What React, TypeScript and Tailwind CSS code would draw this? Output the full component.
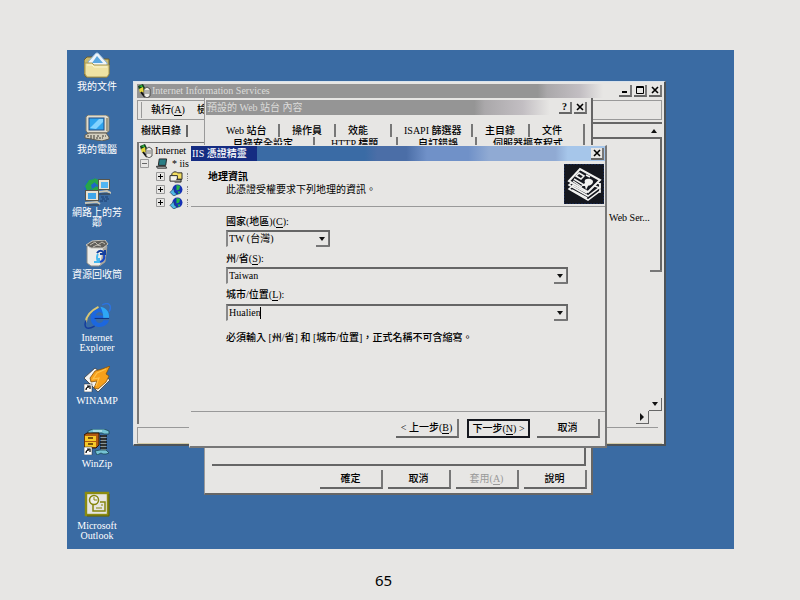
import React from "react";

const desktopIcons: { name: string; icon: React.ReactNode }[] = [
  { name: "我的文件", icon: <DocumentsIcon /> },
  { name: "我的電腦", icon: <ComputerIcon /> },
  { name: "網路上的芳鄰", icon: <NetworkIcon /> },
  { name: "資源回收筒", icon: <RecycleIcon /> },
  { name: "Internet Explorer", icon: <ExplorerIcon /> },
  { name: "WINAMP", icon: <WinampIcon /> },
  { name: "WinZip", icon: <WinZipIcon /> },
  { name: "Microsoft Outlook", icon: <OutlookIcon /> },
];

function DocumentsIcon() {
  return (
    <svg viewBox="0 0 26 26" className="size-[26px]">
      <path d="M0 8l3-3h6l2 2h14v15l-2 3H2l-2-3z" fill="#c9bb72" stroke="#6d5f2a" />
      <path d="M4 10L12 1l2 0 9 10v4H5z" fill="#eef4fa" stroke="#8db4d8" />
      <path d="M8 11l5-7 6 7z" fill="#5aa7e0" />
      <path d="M1 11h7l2 2h15v9l-2 3H3l-2-3z" fill="#efe3a4" stroke="#a99853" />
      <path d="M3 13h5l2 2h13" stroke="#fbf6d4" fill="none" />
    </svg>
  );
}

function ComputerIcon() {
  return (
    <svg viewBox="0 0 26 26" className="size-[26px]">
      <path d="M2 2l2-2h18l3 2v14l-3 2H4l-2-2z" fill="#dfdccf" stroke="#7c7866" />
      <rect x="5" y="3" width="15" height="12" fill="#2fa4ee" stroke="#264f86" />
      <path d="M6 13l9-9h4v3l-7 7z" fill="#82d3ff" />
      <path d="M23 3v13" stroke="#a29d86" strokeWidth="2" />
      <path d="M1 20l4-2h17l3 4v2l-7 2-17-3z" fill="#d3cfbf" stroke="#5e5b50" />
      <path d="M3 21h8m2 0h3m2 0h4M6 23h13" stroke="#3c3a35" strokeDasharray="2 1" />
    </svg>
  );
}

function NetworkIcon() {
  return (
    <svg viewBox="0 0 28 28" className="size-[28px]">
      <circle cx="11" cy="10" r="9.500" fill="#1f66c8" />
      <path d="M2 8l4-6 5-1 1 3-4 3 1 4-5 2zM11 0l5 2v6l-4-3zM9 11l5-3 3 5-3 4-5-2z" fill="#27a548" />
      <rect x="15.500" y="1.500" width="11" height="10" fill="#e6e2d3" stroke="#57554b" />
      <rect x="18" y="4" width="7" height="6" fill="#4fb5f2" />
      <path d="M15 14l9-1 4 2" stroke="#c9c5b4" strokeWidth="2" fill="none" />
      <path d="M16 16h11" stroke="#3b3932" />
      <rect x="2.500" y="12.500" width="13" height="10" fill="#e6e2d3" stroke="#57554b" />
      <rect x="5" y="15" width="8" height="6" fill="#3fa6ea" />
      <path d="M2 25l12-1 3 2" stroke="#c9c5b4" strokeWidth="2" fill="none" />
      <path d="M3 27h13" stroke="#3b3932" />
      <path d="M18 19h8m-7 2h7m-9 2h8" stroke="#1a3e70" strokeDasharray="3 1" />
    </svg>
  );
}

function RecycleIcon() {
  return (
    <svg viewBox="0 0 26 28" className="h-7 w-[26px]">
      <path d="M3 6h20l-2 16-6 4H7l-4-3z" fill="#ededea" stroke="#8b8b86" />
      <path d="M19 8l4-2-2 16-5 4z" fill="#a8a6a0" />
      <path d="M2 5l6-4 13-1 3 4-5 4H7z" fill="#615f5a" stroke="#c6c3bb" />
      <path d="M6 5l5-3 3 3 4-3 3 2M9 7l4-2 4 1" stroke="#c2beb4" fill="none" />
      <path d="M13 13c2-3 5-3 7 0m1-3v4h-5" stroke="#143f9e" strokeWidth="2" fill="none" />
      <path d="M14 14c-2 3-1 5 0 8m-4 0h5v-4" stroke="#47b9f0" strokeWidth="2" fill="none" />
      <path d="M20 15c1 4-1 6-4 7" stroke="#1546c8" strokeWidth="2" fill="none" />
    </svg>
  );
}

function ExplorerIcon() {
  return (
    <svg viewBox="0 0 28 28" className="size-[27px]">
      <path d="M26 18c-3 10-19 9-19-2C7 3 26 2 26 13v3H12c0 6 7 6 8 2z" fill="#1c67df" />
      <path d="M12 13c1-5 7-5 8 0z" fill="#3a6ba3" />
      <path d="M17 4c6 1 9 5 9 10v2h-6c0-5-1-8-3-12z" fill="#2ea7f5" />
      <path d="M19 2c8-4 10 2 7 7" fill="none" stroke="#2b73e0" strokeWidth="1.5" />
      <path d="M15 4C7 8 2 14 2 20" fill="none" stroke="#d9c774" strokeWidth="2" />
      <path d="M2 18c-3 9 2 10 9 6" fill="none" stroke="#143b9c" strokeWidth="1.5" />
      <path d="M11 16h15" stroke="#0e2f7e" />
    </svg>
  );
}

function ShortcutBadge() {
  return (
    <>
      <rect x="0" y="18" width="8" height="8" fill="#fff" stroke="#222" strokeWidth=".5" />
      <path d="M2 24c0-2 1-3 3-3m-2-1h3v3" fill="none" stroke="#000" strokeWidth="1.2" />
    </>
  );
}

function WinampIcon() {
  return (
    <svg viewBox="0 0 26 26" className="size-[26px]">
      <path d="M0 12L11 2l15 12-12 12z" fill="#f3f3f1" stroke="#3c3c3c" strokeWidth=".8" />
      <path d="M26 0l-8 3-7 2-5 7 1 4 6-1-3 7 4 1 8-7 3-6-3-2z" fill="#f7a01b" stroke="#83500a" strokeWidth=".8" />
      <path d="M22 3l-9 4-4 6 6-1-3 8" fill="none" stroke="#ffc24a" strokeWidth="1.200" />
      <ShortcutBadge />
    </svg>
  );
}

function WinZipIcon() {
  return (
    <svg viewBox="0 0 26 26" className="size-[26px]">
      <path d="M4 2l5-2h11l5 2v3l-5 0-2-1H9L4 5z" fill="#75c3d4" stroke="#1d4a55" strokeWidth=".8" />
      <path d="M9 2h9" stroke="#d8f4f8" />
      <path d="M17 6h5v15h-5z" fill="#8a9496" />
      <path d="M16 7h7m-7 3h7m-7 3h7m-7 3h7m-7 3h7" stroke="#111" strokeWidth="1.6" />
      <path d="M11 22l5-1h6l3 3-3 1h-3l-2-1-4 2z" fill="#75c3d4" stroke="#1d4a55" strokeWidth=".8" />
      <path d="M0 6l3-2h12v12l-3 3H0z" fill="#b05a12" stroke="#2d1703" />
      <rect x="1" y="7" width="11" height="5" fill="#f7c928" />
      <rect x="1" y="13" width="11" height="5" fill="#f7c928" />
      <path d="M4 9h5M4 15h5" stroke="#4d2a03" strokeWidth="1.5" />
      <ShortcutBadge />
    </svg>
  );
}

function OutlookIcon() {
  return (
    <svg viewBox="0 0 26 26" className="size-[26px]">
      <rect x="2" y="2" width="22" height="22" fill="#e7e6e0" stroke="#8c8c10" strokeWidth="2.400" />
      <path d="M3 25h22V3" fill="none" stroke="#5f5f08" />
      <circle cx="10" cy="9" r="4.500" fill="#f1f0ea" stroke="#85850c" strokeWidth="1.500" />
      <path d="M10 6v3h3" fill="none" stroke="#85850c" />
      <path d="M9 14v6h12v-9h-5" fill="none" stroke="#85850c" strokeWidth="1.500" />
      <path d="M12 17h6M17 14h2" stroke="#85850c" />
    </svg>
  );
}

function ServerIcon() {
  return (
    <svg viewBox="0 0 14 14" className="size-3.5 shrink-0">
      <path d="M1 2l5-2 2 4-2 3-4-1z" fill="#123c1c" />
      <path d="M2 2l3-1 1 3z" fill="#2ab53c" />
      <path d="M2 5l4-2 1 5-4 1z" fill="#e8d83a" />
      <path d="M4 8l4 5" stroke="#111" strokeWidth="2" />
      <path d="M7 5l3-2 3 2v7l-3 2-3-2z" fill="#ecebe6" stroke="#333" strokeWidth=".8" />
      <path d="M8 7h4M8 9h4" stroke="#777" />
    </svg>
  );
}

function TerminalIcon() {
  return (
    <svg viewBox="0 0 14 13" className="h-3 w-3.5 shrink-0">
      <path d="M4 1h8l-1 7H3z" fill="#2a7d85" stroke="#222" />
      <path d="M1 9h10l1 2H2z" fill="#ccc" stroke="#222" />
    </svg>
  );
}

function FtpIcon() {
  return (
    <svg viewBox="0 0 15 13" className="h-3 w-3.5 shrink-0">
      <path d="M3 3l2-2h3l1 1h5v7H3z" fill="#f2dd62" stroke="#222" />
      <path d="M1 5h8v6H1z" fill="#f3f3ee" stroke="#222" />
      <path d="M8 9h5v3H6" fill="#9a9a94" stroke="#222" />
    </svg>
  );
}

function SiteIcon() {
  return (
    <svg viewBox="0 0 15 13" className="h-3 w-3.5 shrink-0">
      <circle cx="9" cy="6" r="5.500" fill="#1530b5" />
      <path d="M8 1l4 1-1 4-3 1zM9 8l3 0-1 3z" fill="#25b846" />
      <path d="M1 9l4-4 1 4 3 2-4 2z" fill="#4fb7e6" stroke="#17314a" strokeWidth=".7" />
    </svg>
  );
}

function CertificateIcon() {
  return (
    <svg viewBox="0 0 40 40" className="size-10 shrink-0 bg-[#15171e]" aria-hidden="true">
      <rect x=".5" y=".5" width="39" height="39" fill="none" stroke="#1b3470" strokeDasharray="1 2" />
      <path d="M5 25l19 11 12-9v-3L16 16zM5 21l19 11 12-9v-3L16 12z" fill="#15171e" stroke="#f2f2f0" strokeWidth="1.500" />
      <path d="M5 17L16 5l20 11-12 12z" fill="#15171e" stroke="#f2f2f0" strokeWidth="2" />
      <path d="M15 9l5 3-3 3-5-3z" fill="none" stroke="#f2f2f0" strokeWidth="1.500" />
      <path d="M22 11l4 2M10 15l10 6M9 17l9 6" stroke="#f2f2f0" strokeWidth="1.500" />
      <path d="M23 15c4-1 8 2 5 5-2 2-3 1-4 2l-2 4-1-4-4 0 4-3c-1-2 0-4 2-4z" fill="#f2f2f0" />
      <path d="M8 21l15 8M8 26l15 8M36 19v5M36 26v3" stroke="#f2f2f0" strokeWidth="1.500" />
    </svg>
  );
}

type Glyph = "min" | "max" | "close" | "help";

function CaptionButton({ kind, label }: { kind: Glyph; label: string }) {
  return (
    <button
      aria-label={label}
      className="flex h-3 w-[13px] shrink-0 items-center justify-center border-r-2 border-b-2 border-r-[#777] border-b-[#666] bg-[#e7e6e4] text-[10px] leading-none font-bold text-black"
    >
      {kind === "help" ? (
        "?"
      ) : (
        <svg viewBox="0 0 8 8" className="size-2" fill="none" stroke="#000">
          {kind === "min" && <path d="M1 6h5" strokeWidth="2" />}
          {kind === "max" && <path d="M.5 .5h7v7h-7zM.5 1.500h7" />}
          {kind === "close" && <path d="M1 1l6 6M7 1L1 7" strokeWidth="1.600" />}
        </svg>
      )}
    </button>
  );
}

function Key({ children }: { children: string }) {
  return (
    <>
      (<span className="border-b border-current">{children}</span>)
    </>
  );
}

function Arrow({ d }: { d: string }) {
  return (
    <svg viewBox="0 0 8 8" className="size-2" fill="#111">
      <path d={d} />
    </svg>
  );
}
const DOWN = "M1 2h6L4 6z";
const UP = "M1 6h6L4 2z";
const RIGHT = "M2 0v8l4-4z";

function PushButton({ children, disabled, primary }: { children: React.ReactNode; disabled?: boolean; primary?: boolean }) {
  return (
    <button
      disabled={disabled}
      className={
        "flex h-[19px] w-[63px] items-center justify-center leading-3 whitespace-nowrap " +
        (primary
          ? "border-2 border-[#15171e] "
          : "border-r-2 border-b-2 border-r-[#777] border-b-[#666] ") +
        (disabled ? "text-[#999]" : "font-medium text-black")
      }
    >
      <span>{children}</span>
    </button>
  );
}

function ComboShell({ children, className }: { children: React.ReactNode; className: string }) {
  return (
    <div
      className={
        "relative flex h-[17px] border-t-2 border-r-2 border-b border-l-2 border-t-[#666] border-r-[#666] border-b-[#e7e6e4] border-l-[#888] " +
        className
      }
    >
      {children}
      <span className="pointer-events-none absolute top-0 -right-px flex h-[15px] w-[13px] items-center justify-center border-r border-b-2 border-[#777]">
        <Arrow d={DOWN} />
      </span>
    </div>
  );
}

function ExpandBox({ open }: { open?: boolean }) {
  return (
    <svg viewBox="0 0 9 9" className="size-[9px] shrink-0" fill="none">
      <path d="M.5 .5h8v8h-8z" stroke="#999" />
      <path d={open ? "M2 4.500h5" : "M2 4.500h5M4.500 2v5"} stroke={open ? "#666" : "#000"} />
    </svg>
  );
}

function TabLabel({ children, className }: { children: string; className: string }) {
  return (
    <button className={"h-[13px] shrink-0 border-r-2 border-[#777] text-left leading-3 font-medium whitespace-nowrap " + className}>
      {children}
    </button>
  );
}

function ConsoleWindow() {
  return (
    <section className="absolute top-[31px] left-[66px] flex h-[365px] w-[533px] flex-col border-t border-r-2 border-b-2 border-l border-t-[#d8e2ec] border-r-[#4d5358] border-b-[#4d5358] border-l-[#d8e2ec] bg-[#e7e6e4] pt-0.5 pr-0.5 pl-[3px]">
      <header className="flex h-3.5 items-center">
        <div className="flex h-3.5 w-[466px] items-center gap-px bg-[linear-gradient(90deg,#959595_86%,#aaa8aa_88%,#c2bec2_95%,#e7e6e4)] text-[#dcdcda]">
          <ServerIcon />
          <h2 className="leading-3">Internet Information Services</h2>
        </div>
        <div className="ml-auto flex gap-0.5">
          <CaptionButton kind="min" label="最小化" />
          <CaptionButton kind="max" label="最大化" />
          <CaptionButton kind="close" label="關閉" />
        </div>
      </header>
      <nav className="mt-0.5 flex h-5 items-center border border-[#999] pl-[3px] font-medium">
        <span className="h-4 border-l border-[#999]" />
        <button className="ml-[9px] leading-3">執行<Key>A</Key></button>
        <button className="ml-3 leading-3">檢</button>
      </nav>
      <div className="flex min-h-0 flex-1">
        <div className="flex w-[200px] flex-col">
          <div className="flex h-[22px] items-center pl-1">
            <h3 className="w-[47px] border-r-2 border-[#666] leading-3 font-medium">樹狀目錄</h3>
          </div>
          <ul className="flex-1 border-t border-l-2 border-[#777] pt-px">
            <li className="flex h-[13px] items-center gap-0.5">
              <ServerIcon />
              Internet
            </li>
            <li className="flex h-[13px] items-center gap-1.5 pl-px">
              <ExpandBox open />
              <span className="flex items-center gap-[3px]">
                <TerminalIcon />* iis
              </span>
            </li>
            {[<FtpIcon key="f" />, <SiteIcon key="s" />, <SiteIcon key="t" />].map((icon, i) => (
              <li key={i} className="flex h-[13px] items-center gap-1 pl-[17px]">
                <ExpandBox />
                {icon}
                <span className="h-2 border-l border-dotted border-[#888]" />
              </li>
            ))}
          </ul>
        </div>
        <div className="flex flex-1 flex-col pt-0.5">
          <div className="flex h-[17px] items-center justify-end border-t-2 border-b-2 border-[#666] pr-1">
            <button aria-label="向上捲動"><Arrow d={UP} /></button>
          </div>
          <div className="flex h-[131px] justify-end border-r-2 border-[#666]">
            <p className="mt-[73px] mr-[5px] h-3 w-[46px] leading-3 whitespace-nowrap">Web Ser...</p>
          </div>
          <span className="h-0.5 w-3 self-end bg-[#777]" />
          <div className="mt-auto flex flex-col items-end">
            <button aria-label="向下捲動" className="flex h-[13px] w-[13px] items-center justify-center border-r border-b border-[#666]">
              <Arrow d={DOWN} />
            </button>
            <button aria-label="向右捲動" className="mr-[13px] flex h-[13px] w-[13px] items-center justify-center border-r border-b border-[#666]">
              <Arrow d={RIGHT} />
            </button>
          </div>
        </div>
      </div>
      <footer className="mt-[3px] mr-1 h-4 border-t border-l border-[#999]" />
      <span className="h-px bg-[#d3cba8]" />
    </section>
  );
}

function PropertiesWindow() {
  return (
    <section className="absolute top-12 left-[137px] flex h-[397px] w-[389px] flex-col border-r-2 border-b-2 border-l border-r-[#666] border-b-[#666] border-l-[#999] bg-[#e7e6e4] pt-0.5">
      <header className="flex h-[15px] items-center pr-1 pl-px">
        <h2 className="w-[344px] bg-[linear-gradient(90deg,#959595_78%,#aaa8aa_81%,#c2bec2_92%,#e7e6e4)] pl-px leading-[15px] text-[#dcdcda]">
          預設的 Web 站台 內容
        </h2>
        <div className="ml-auto flex gap-0.5">
          <CaptionButton kind="help" label="說明" />
          <CaptionButton kind="close" label="關閉" />
        </div>
      </header>
      <div className="mt-[9px] flex">
        <TabLabel className="w-[75px] pl-[21px]">Web 站台</TabLabel>
        <TabLabel className="w-14 pl-3">操作員</TabLabel>
        <TabLabel className="w-14 pl-3">效能</TabLabel>
        <TabLabel className="w-[81px] pl-3">ISAPI 篩選器</TabLabel>
        <TabLabel className="w-[57px] pl-3">主目錄</TabLabel>
        <TabLabel className="w-[55px] pl-3">文件</TabLabel>
      </div>
      <div className="flex">
        <TabLabel className="w-[110px] pl-7">目錄安全設定</TabLabel>
        <TabLabel className="w-[83px] pl-4">HTTP 標題</TabLabel>
        <TabLabel className="w-[79px] pl-5">自訂錯誤</TabLabel>
        <TabLabel className="w-[108px] pl-4">伺服器擴充程式</TabLabel>
      </div>
      <div className="mr-[5px] ml-[7px] flex-1 border-r-2 border-b-2 border-[#666]" />
      <footer className="mt-1 mb-1 flex justify-end gap-[5px] pr-1">
        <PushButton>確定</PushButton>
        <PushButton>取消</PushButton>
        <PushButton disabled>套用<Key>A</Key></PushButton>
        <PushButton>說明</PushButton>
      </footer>
    </section>
  );
}

function WizardDialog() {
  return (
    <section
      role="dialog"
      aria-labelledby="wizard-title"
      className="absolute top-[95px] left-[122px] flex h-[303px] w-[418px] flex-col border-t border-r-2 border-b-2 border-l border-t-[#e7e6e4] border-r-[#777] border-b-[#777] border-l-[#e7e6e4] bg-[#e7e6e4] pl-px"
    >
      <header className="flex h-[15px] shrink-0 items-center bg-[linear-gradient(90deg,#152c82_16%,#3a6ba5_16%,#3a6ba5_42%,#4b6ea7_45%,#4b6ea7_52%,#7091c8_57%,#7091c8_67%,#90aad3_72%,#90aad3_88%,#a6c6ea_91%)] pr-px">
        <h2 id="wizard-title" className="pl-px leading-[15px] font-medium text-white">IIS 憑證精靈</h2>
        <div className="ml-auto flex">
          <CaptionButton kind="close" label="關閉" />
        </div>
      </header>
      <div className="flex h-[46px] shrink-0 items-start justify-between border-b border-[#999] pt-[3px] pr-px pl-[17px]">
        <div className="pt-1.5">
          <h3 className="leading-[13px] font-bold">地理資訊</h3>
          <p className="pl-[18px] leading-[13px]">此憑證受權要求下列地理的資訊。</p>
        </div>
        <CertificateIcon />
      </div>
      <form className="flex flex-1 flex-col gap-[3px] pt-1.5 pr-[37px] pl-[35px]">
        <div className="flex flex-col gap-px">
          <label htmlFor="country" className="h-4 pt-px leading-4 font-medium">國家(地區)<Key>C</Key>:</label>
          <ComboShell className="w-[104px]">
            <select id="country" className="w-full appearance-none bg-transparent pl-px leading-3 outline-none">
              <option>TW (台灣)</option>
            </select>
          </ComboShell>
        </div>
        <div className="flex flex-col gap-px">
          <label htmlFor="state" className="h-4 pt-px leading-4 font-medium">州/省<Key>S</Key>:</label>
          <ComboShell className="w-full">
            <input id="state" defaultValue="Taiwan" className="w-full bg-transparent pl-px leading-3 outline-none" />
          </ComboShell>
        </div>
        <div className="flex flex-col gap-px">
          <label htmlFor="city" className="h-4 leading-4 font-medium">城市/位置<Key>L</Key>:</label>
          <ComboShell className="w-full">
            <input id="city" defaultValue="Hualien" className="w-full bg-transparent pl-px leading-3 outline-none" />
            <span className="absolute top-px left-8 h-3 w-px bg-black" />
          </ComboShell>
        </div>
        <p className="mt-1.5 leading-4 font-medium whitespace-nowrap">必須輸入 [州/省] 和 [城市/位置]，正式名稱不可含縮寫。</p>
      </form>
      <footer className="flex h-[35px] shrink-0 justify-end border-t border-[#999] pt-[7px] pr-[5px]">
        <PushButton>&lt; 上一步<Key>B</Key></PushButton>
        <span className="mr-[7px] ml-2">
          <PushButton primary>下一步<Key>N</Key> &gt;</PushButton>
        </span>
        <PushButton>取消</PushButton>
      </footer>
    </section>
  );
}

export default function App() {
  return (
    <div className="flex min-h-screen flex-col bg-[#e7e6e4] pt-[50px] pr-[66px] pl-[67px] text-black">
      <main className="relative min-h-[499px] flex-1 overflow-hidden bg-[#3a6ba3] font-['Liberation_Serif','Noto_Sans_CJK_TC',serif] text-[10px] leading-3">
        <ul className="-mb-2 grid h-[504px] w-[60px] grid-rows-8 pt-0.5">
          {desktopIcons.map((item) => (
            <li key={item.name} className="h-0">
              <button className="flex w-full flex-col items-center px-1 leading-[10px] text-white">
                <span className="flex h-[30px] items-start">{item.icon}</span>
                <span>{item.name}</span>
              </button>
            </li>
          ))}
        </ul>
        <ConsoleWindow />
        <PropertiesWindow />
        <WizardDialog />
      </main>
      <footer className="flex h-[51px] items-center justify-center pt-3 pr-[34px] font-['Noto_Sans',sans-serif] text-[15px]">65</footer>
    </div>
  );
}
